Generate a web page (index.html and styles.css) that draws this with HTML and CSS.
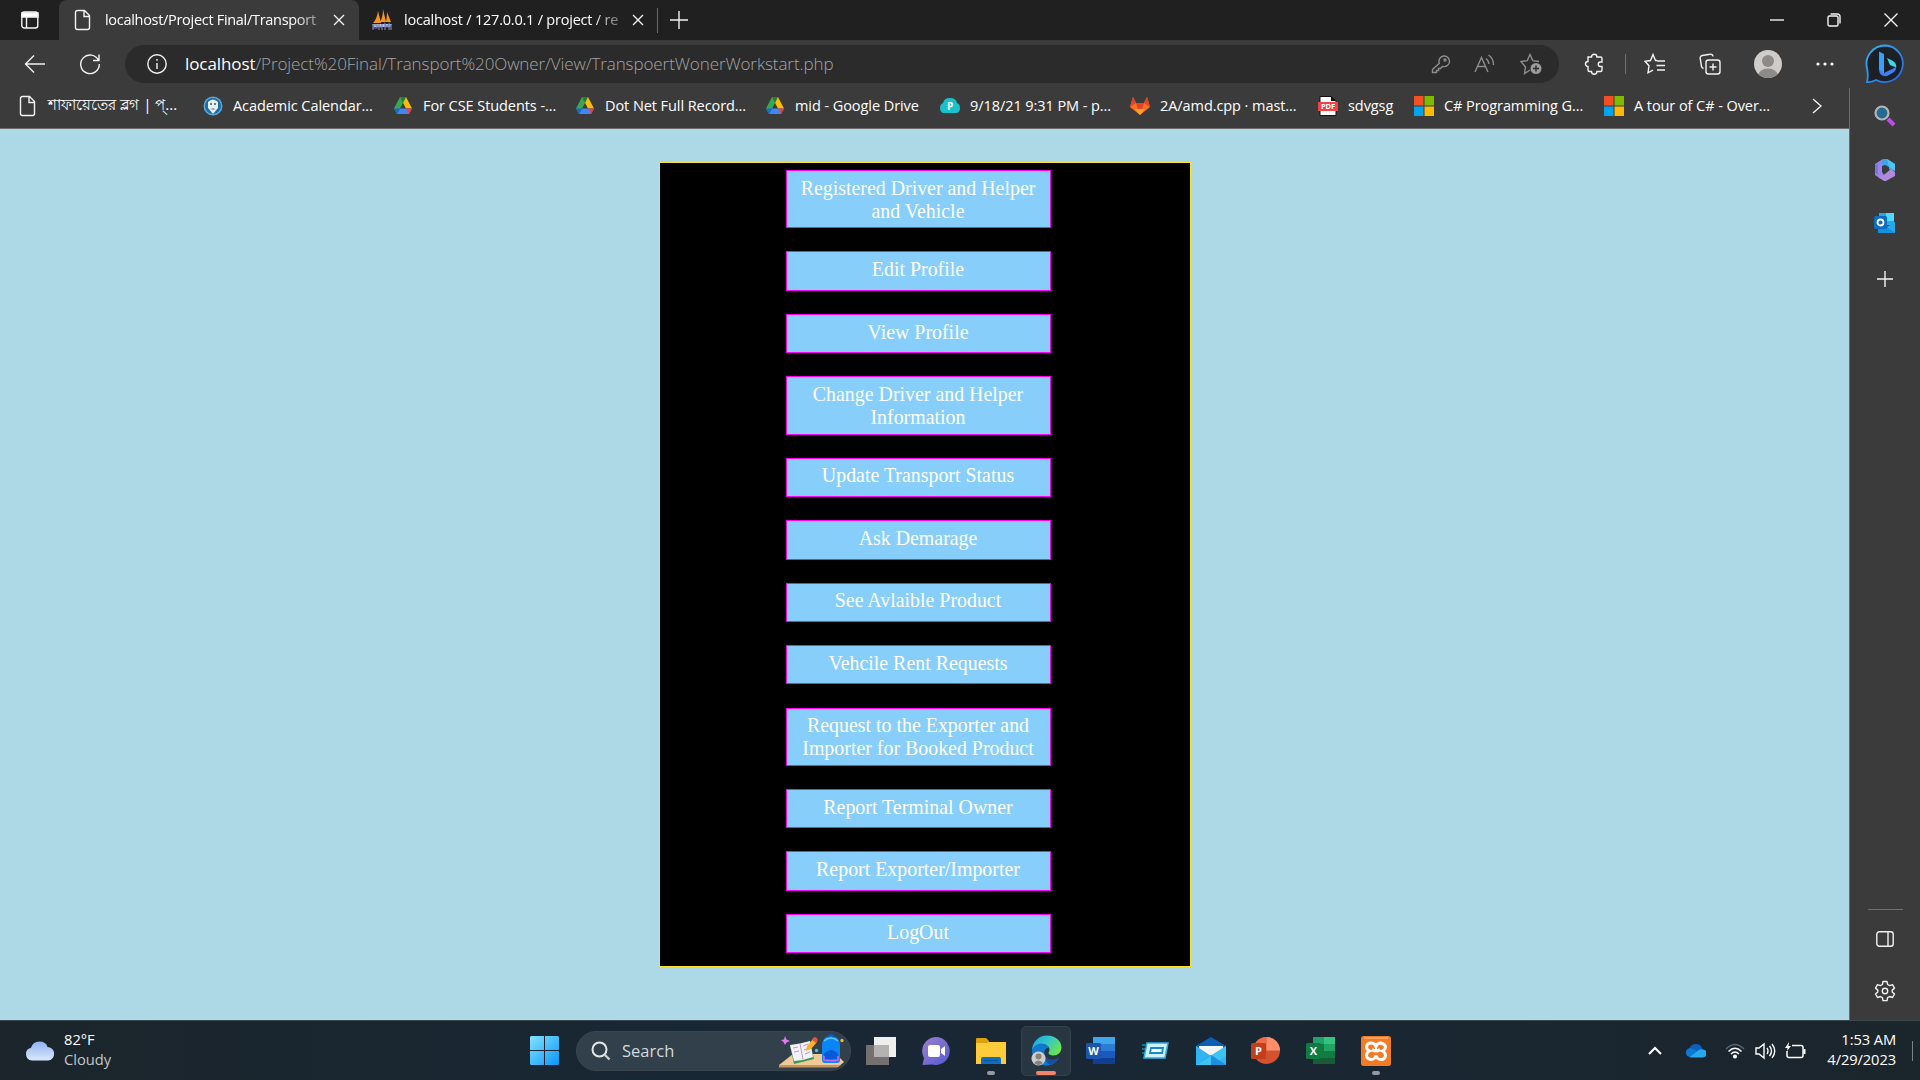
FILE: index.html
```html
<!DOCTYPE html>
<html lang="en">
<head>
<meta charset="utf-8">
<title>Transport Owner</title>
<link rel="stylesheet" href="styles.css">
</head>
<body>
<div class="desktop">
  <header class="tabstrip">
    <div class="tab-actions"><svg class="line" width="20" height="20" viewBox="0 0 20 20"><rect x="1.8" y="2" width="16" height="16" rx="2.5"/><path d="M2 3h16v4H2z" fill="#fff"/><path d="M6.5 7v11"/></svg></div>
    <div class="tab active">
      <svg class="line" width="20" height="22" viewBox="0 0 20 22"><path d="M4.500 1.500h7l5 5v12a2 2 0 0 1-2 2h-10a2 2 0 0 1-2-2v-15a2 2 0 0 1 2-2zM11 1.500v6h5.500"/></svg>
      <span class="tab-title">localhost/Project Final/Transport</span>
      <svg class="line close" width="12" height="12" viewBox="0 0 12 12"><path d="M1 1l10 10M11 1L1 11"/></svg>
    </div>
    <div class="tab">
      <svg width="22" height="22" viewBox="0 0 22 22"><path d="M2 14Q6 10 7 2l3 12zM9 13Q12 8 12 0l3 13zM15 13q1-5 1-10l4 10z" fill="#f7961d"/><path d="M1 15h20l-2 3H3z" fill="#b9bfe2"/><path d="M2 15v6M2 16h4v3H2M8 15v6M11 15v6M8 18h3M14 21v-6l2 3 2-3v6M20 15v6" fill="none" stroke="#7780b7" stroke-width="1.200"/></svg>
      <span class="tab-title second">localhost / 127.0.0.1 / project / re</span>
      <svg class="line close" width="12" height="12" viewBox="0 0 12 12"><path d="M1 1l10 10M11 1L1 11"/></svg>
    </div>
    <div class="tab-divider"></div>
    <svg class="line new-tab" width="18" height="18" viewBox="0 0 18 18"><path d="M9 0v18M0 9h18"/></svg>
    <div class="window-controls">
      <svg class="line" width="14" height="14" viewBox="0 0 14 14"><path d="M0 7h14"/></svg>
      <svg class="line" width="14" height="14" viewBox="0 0 14 14"><rect x="1" y="3" width="10" height="10" rx="1.500"/><path d="M3.500 1h7a2.500 2.500 0 0 1 2.500 2.500v7"/></svg>
      <svg class="line" width="14" height="14" viewBox="0 0 14 14"><path d="M.5.5l13 13M13.500.5l-13 13"/></svg>
    </div>
  </header>

  <div class="toolbar">
    <svg class="line back" width="22" height="20" viewBox="0 0 22 20"><path d="M21 10H1.500M10 1.500L1.500 10l8.500 8.500"/></svg>
    <svg class="line reload" width="22" height="22" viewBox="0 0 22 22"><path d="M19.500 7.500A9.300 9.300 0 1 0 20.300 11M20 1.500v6h-6"/></svg>
    <div class="address">
      <svg class="line" width="20" height="20" viewBox="0 0 20 20"><circle cx="10" cy="10" r="9.200"/><path d="M10 9v6M10 5v1.800"/></svg>
      <span class="url"><b>localhost</b>/Project%20Final/Transport%20Owner/View/TranspoertWonerWorkstart.php</span>
      <div class="address-icons">
        <svg width="20" height="20" viewBox="0 0 20 20"><path d="M8.300 9.200a5.300 5.300 0 1 1 3.300 3.100L9.500 14.500H7.500v2H5.500v2H1.500v-3z"/><circle cx="14" cy="6" r="1"/></svg>
        <svg width="22" height="20" viewBox="0 0 22 20"><path d="M1 18L7.500 3.500 14 18M3.500 12.500h8M12 4.500q2.500 2 3 5.500M14.500 1q5 3.500 5 10"/></svg>
        <svg width="24" height="22" viewBox="0 0 24 22"><path d="M11 17l-5.500 3.500 1-6.500L2 8.500l6.300-.9L11 1.500l2.800 6.100 6.200.9"/><circle cx="17" cy="15.500" r="5.500" fill="#9b9b9b" stroke="none"/><path d="M17 12.500v6M14 15.500h6" stroke="#2b2b2b"/></svg>
      </div>
    </div>
    <div class="toolbar-icons">
      <svg class="line ext" width="20" height="22" viewBox="0 0 20 22"><path d="M4 4h3.500a2.700 2.700 0 0 1 5.400 0H16.500q1.500 0 1.500 1.500V9h-1.500a2.200 2.200 0 0 0 0 4.500H18V17q0 1.500-1.500 1.500h-3.600a2.700 2.700 0 0 1-5.400 0H5.500Q4 18.500 4 17v-3.500a2.500 2.500 0 0 1 0-5z"/></svg>
      <div class="tool-divider"></div>
      <svg class="line fav" width="22" height="22" viewBox="0 0 22 22"><path d="M13 7.500h-1.500L9 1.500 6.500 7.500 1 8.300l4 4.500-1 7 5-2.600M13 8h8M12.500 12.500H21M13 17h8"/></svg>
      <svg class="line coll" width="22" height="22" viewBox="0 0 22 22"><rect x="7" y="7" width="14" height="14" rx="2.500"/><path d="M14 10.500v7M10.500 14h7M4.500 15.500a3 3 0 0 1-2-2L1.200 5.500a2.500 2.500 0 0 1 2-3L11 1.200a2.500 2.500 0 0 1 3 2.300"/></svg>
      <svg class="avatar" width="28" height="28" viewBox="0 0 28 28"><clipPath id="av"><circle cx="14" cy="14" r="14"/></clipPath><g clip-path="url(#av)"><path d="M0 0h28v28H0z" fill="#cfccca"/><circle cx="14" cy="11" r="6" fill="#8e8a87"/><ellipse cx="14" cy="26" rx="10" ry="7.500" fill="#8e8a87"/></g></svg>
      <svg class="dots" width="18" height="4" viewBox="0 0 18 4" fill="#fff"><circle cx="2" cy="2" r="1.600"/><circle cx="9" cy="2" r="1.600"/><circle cx="16" cy="2" r="1.600"/></svg>
      <svg class="bing" width="40" height="40" viewBox="0 0 40 40"><defs><linearGradient id="bg1" x1="0" y1="0" x2="1" y2="1"><stop offset="0" stop-color="#25bdf2"/><stop offset="1" stop-color="#2a62e8"/></linearGradient></defs><path d="M20 1.500A18.300 18.300 0 1 1 11 36Q6 38.500 2 38 3.500 33 2.200 25A18.500 18.500 0 0 1 20 1.500z" fill="#1c1f26" stroke="url(#bg1)" stroke-width="1.800"/><path d="M14 7.500l5 2.500v20l-5-4z" fill="#38a0fa"/><path d="M14 25q0 6 5 7 3 .5 5-1l5-3q2.500-2 2-5l-12 6z" fill="#3f7df5"/><path d="M22 14l6 3q3.500 2 3.300 6.500L25 21z" fill="#38d9e9"/></svg>
    </div>
  </div>

  <div class="browser-body">
    <div class="viewport">
      <nav class="bookmarks">
        <div class="bookmark"><svg class="line" width="20" height="22" viewBox="0 0 20 22"><path d="M4.500 1.500h7l5 5v12a2 2 0 0 1-2 2h-10a2 2 0 0 1-2-2v-15a2 2 0 0 1 2-2zM11 1.500v6h5.500"/></svg><span class="bengali">শাফায়েতের ব্লগ | প্...</span></div>
        <div class="bookmark"><svg width="20" height="20" viewBox="0 0 20 20"><circle cx="10" cy="10" r="9.500" fill="#5ca9d7"/><circle cx="10" cy="10" r="8" fill="#1b6dab"/><path d="M5 6q5-5 10 0v6l-5 6-5-6z" fill="#e4f0f4"/><circle cx="8" cy="8" r="1" fill="#5b4b43"/><circle cx="12" cy="8" r="1" fill="#5b4b43"/><path d="M8.500 13h3" stroke="#6f6058"/></svg><span>Academic Calendar...</span></div>
        <div class="bookmark"><svg width="20" height="20" viewBox="0 0 20 20"><use href="#drive"/></svg><span>For CSE Students -...</span></div>
        <div class="bookmark"><svg width="20" height="20" viewBox="0 0 20 20"><use href="#drive"/></svg><span>Dot Net Full Record...</span></div>
        <div class="bookmark"><svg width="20" height="20" viewBox="0 0 20 20"><use href="#drive"/></svg><span>mid - Google Drive</span></div>
        <div class="bookmark"><svg width="20" height="20" viewBox="0 0 20 20"><path d="M3 17q-3-1-3-5t3-5q1-5 7-5t7 5q3 1 3 5t-3 5z" fill="#18c1cb"/><text x="10" y="13.500" class="glyph" font-size="10">P</text></svg><span>9/18/21 9:31 PM - p...</span></div>
        <div class="bookmark"><svg width="20" height="20" viewBox="0 0 20 20"><path d="M0 11L3 1l3 6h8l3-6 3 10-10 8z" fill="#fc6d26"/><path d="M6 7h8l-4 12z" fill="#e24329"/><path d="M3 1l3 6-6 4zM17 1l-3 6 6 4z" fill="#e24329"/><path d="M10 19l-5-6h10z" fill="#fca326"/></svg><span>2A/amd.cpp · mast...</span></div>
        <div class="bookmark"><svg width="20" height="20" viewBox="0 0 20 20"><path d="M2 .5h11l5 5v14H2z" fill="#fff" stroke="#111"/><path d="M13 0v5h5z" fill="#111"/><path d="M0 6h20v9H0z" fill="#f04349"/><text x="10" y="13.300" class="glyph" font-size="7.500">PDF</text></svg><span>sdvgsg</span></div>
        <div class="bookmark"><svg width="20" height="20" viewBox="0 0 20 20"><use href="#ms"/></svg><span>C# Programming G...</span></div>
        <div class="bookmark"><svg width="20" height="20" viewBox="0 0 20 20"><use href="#ms"/></svg><span>A tour of C# - Over...</span></div>
        <svg class="line more" width="10" height="16" viewBox="0 0 10 16"><path d="M1 1l8 7-8 7"/></svg>
      </nav>
      <main class="page">
        <div class="menu">
          <a class="menu-item tall">Registered Driver and Helper and Vehicle</a>
          <a class="menu-item">Edit Profile</a>
          <a class="menu-item">View Profile</a>
          <a class="menu-item tall">Change Driver and Helper Information</a>
          <a class="menu-item">Update Transport Status</a>
          <a class="menu-item">Ask Demarage</a>
          <a class="menu-item">See Avlaible Product</a>
          <a class="menu-item">Vehcile Rent Requests</a>
          <a class="menu-item tall">Request to the Exporter and Importer for Booked Product</a>
          <a class="menu-item">Report Terminal Owner</a>
          <a class="menu-item">Report Exporter/Importer</a>
          <a class="menu-item">LogOut</a>
        </div>
      </main>
    </div>
    <aside class="sidebar">
      <svg width="22" height="22" viewBox="0 0 22 22"><path d="M14 14l6 6" stroke="#c04af0" stroke-width="4"/><circle cx="8" cy="8" r="6.500" fill="#246a91" stroke="#b5b5b5" stroke-width="2.200"/></svg>
      <svg width="22" height="22" viewBox="0 0 22 22"><path d="M9 0L1 5v11l6 4 3-4-2-3V7l5-4z" fill="#9a86ea"/><path d="M10 0h3l8 5v7l-6-1.500V8l-4-2-3 1V2z" fill="#3f9fe8"/><path d="M21 13v4l-9 5h-2l-6-4 4-1 3-2 6-5z" fill="#b08add"/><path d="M13 0l8 5v7l-6-4z" fill="#4cc5f3"/><path d="M1 14V6l3-2v12z" fill="#7a76e0"/></svg>
      <svg width="22" height="22" viewBox="0 0 22 22"><path d="M5 1h15v12H5z" fill="#28a8ea"/><path d="M12 1h8v8h-8z" fill="#50d9ff"/><path d="M4 10l9 5 8-5v11H4z" fill="#1490df"/><path d="M13 15l8-5v11z" fill="#28a8ea"/><rect x="0" y="4" width="13" height="13" rx="1.500" fill="#0f6cbd"/><circle cx="6.500" cy="10.500" r="3" fill="none" stroke="#fff" stroke-width="1.800"/></svg>
      <svg class="line add" width="16" height="16" viewBox="0 0 16 16"><path d="M8 0v16M0 8h16"/></svg>
      <div class="sidebar-bottom">
        <svg class="line" width="18" height="16" viewBox="0 0 18 16"><rect x=".8" y=".8" width="16.400" height="14.400" rx="2.500"/><path d="M12 1v14"/></svg>
        <svg class="line" width="22" height="22" viewBox="0 0 22 22"><path d="M9 1.500h4l.6 3 2 1.100 2.900-1 2 3.500-2.300 2v1.900l2.300 2-2 3.500-2.900-1-2 1.100-.6 3H9l-.6-3-2-1.100-2.900 1-2-3.500 2.300-2v-1.900l-2.300-2 2-3.500 2.900 1 2-1.100z" stroke-linejoin="round"/><circle cx="11" cy="11" r="2.700"/></svg>
      </div>
    </aside>
  </div>

  <footer class="taskbar">
    <div class="weather">
      <svg width="30" height="20" viewBox="0 0 30 20"><defs><linearGradient id="cl" x1="0" y1="0" x2="0" y2="1"><stop offset="0" stop-color="#8fb4f5"/><stop offset="1" stop-color="#dbe7fb"/></linearGradient></defs><path d="M7 19.500a6.500 6.500 0 0 1-1-12.800Q8 .5 14.500.5t8 5.500a6.800 6.800 0 0 1 1 13.500z" fill="url(#cl)"/></svg>
      <div class="weather-text"><span>82°F</span><span class="dim">Cloudy</span></div>
    </div>
    <div class="apps">
      <svg class="start" width="29" height="29" viewBox="0 0 29 29"><defs><linearGradient id="win" gradientUnits="userSpaceOnUse" x1="0" y1="0" x2="29" y2="29"><stop offset="0" stop-color="#84e2ff"/><stop offset="1" stop-color="#0a96fb"/></linearGradient></defs><path d="M1 0h13v14H0V1zM15 0h13l1 1v13H15zM0 15h14v14H1l-1-1zM15 15h14v13l-1 1H15z" fill="url(#win)"/></svg>
      <div class="search">
        <svg width="20" height="20" viewBox="0 0 20 20"><circle cx="8.500" cy="8.500" r="7" fill="none" stroke="#e4e7e9" stroke-width="2"/><path d="M13.500 13.500l5 5" stroke="#c8cccf" stroke-width="2.400"/></svg>
        <span>Search</span>
        <svg class="search-art" width="66" height="34" viewBox="0 0 66 34"><path d="M0 31L14 20h43l8 8-6 5H0z" fill="#f0c997"/><path d="M0 31h62l-4 2.500H0z" fill="#c7955f"/><path d="M11 12l20-4 4 17-20 5z" fill="#3b9a4c"/><path d="M11 11l10-1.500L31 7l3 16-10 3-9 1z" fill="#f5f0fb"/><path d="M21 9.500l3 16M14 14l5-1M15 18l5-1M24 12l5-2M25 16l5-2M26 20l5-2" stroke="#aaa0c0"/><path d="M27 17l1-5 6-7 4 3-6 7z" fill="#f9b234"/><path d="M33 6l2-3q3 0 4 3l-2 3z" fill="#e8513c"/><path d="M43 26V12q0-10 9-10t9 10v14q0 3-3 3H46q-3 0-3-3z" fill="#0a86fa"/><path d="M45 7q7-6 14 0" stroke="#5cc6ff" fill="none" stroke-width="1.500"/><path d="M49 3q3-5 6 0" stroke="#0758bd" fill="none" stroke-width="2"/><path d="M45 27V20q7-8 14 0v7z" fill="#0759d8"/><path d="M45 22v4q7 1 14 0v-4" fill="none" stroke="#bc72ef" stroke-width="1.500"/><path d="M6 2l1.500 3.500L11 7 7.500 8.500 6 11 4.500 8 2 6l3-.5z" fill="#e67af0"/><circle cx="37.500" cy="16.500" r="1.700" fill="#4ec5d7"/><circle cx="63" cy="6.500" r="1.700" fill="#f5b324"/></svg>
      </div>
      <div class="app"><svg width="30" height="28" viewBox="0 0 30 28"><path d="M0 8h23v20H0z" fill="#74716f"/><path d="M8 0h22v20H8z" fill="#efefef"/><path d="M8 8h15v12H8z" fill="#b5b3b2"/></svg></div>
      <div class="app"><svg width="30" height="30" viewBox="0 0 30 30"><defs><linearGradient id="ch" x1="0" y1="0" x2="1" y2="1"><stop offset="0" stop-color="#9c80cf"/><stop offset="1" stop-color="#5459cf"/></linearGradient></defs><path d="M15 1a14 14 0 1 1-4 27.500L1.500 29 3 22A14 14 0 0 1 15 1z" fill="url(#ch)"/><rect x="7" y="9" width="12" height="12" rx="2" fill="#fff"/><path d="M20 13l4-3v10l-4-3z" fill="#fff"/></svg></div>
      <div class="app running"><svg width="30" height="28" viewBox="0 0 30 28"><path d="M0 2q0-1 1-1h9l3 3v5H0z" fill="#dda20a"/><path d="M0 6h11l2-1h17v22H0z" fill="#fdcb3b"/><path d="M5 27v-5q0-2 2-2h16q2 0 2 2v5z" fill="#0b70c0"/><path d="M8 23.500h14" stroke="#07509a" stroke-width="1.300"/></svg></div>
      <div class="app current"><svg width="31" height="31" viewBox="0 0 31 31"><defs><linearGradient id="eg" x1="0" y1="0" x2="1" y2=".6"><stop offset="0" stop-color="#1a9fe2"/><stop offset=".5" stop-color="#31c6cf"/><stop offset="1" stop-color="#6be34e"/></linearGradient></defs><path d="M1 15c1-5 5-7 10-7 4 0 7 2 7 5-3-1-6 3-4 8 2 4 7 6 14 2-3 5-7 7.500-13 7.500C7 30.500 1 23 1 15z" fill="#1278cf"/><path d="M1 15A15 15 0 0 1 16 .5c9 0 14.500 6 14.500 12 0 5-4 8-8 8-3 0-5-1-5-2.500 0-1 1-1.500 1-3.500 0-3-3-6-8-6-5 0-8 3-9.500 6.500z" fill="url(#eg)"/><path d="M14 21q4 6 14 2-3 5-8 7-6-2-6-9z" fill="#14529d"/><circle cx="7.500" cy="23.500" r="7" fill="#cfcdca"/><circle cx="7.500" cy="21.500" r="3" fill="#85817d"/><path d="M3 28q4.500-5 9 0-4 4-9 0z" fill="#85817d"/></svg></div>
      <div class="app"><svg width="30" height="28" viewBox="0 0 30 28"><path d="M7 0h22v7H7z" fill="#41a5ee"/><path d="M7 7h22v7H7z" fill="#2b7cd3"/><path d="M7 14h22v7H7z" fill="#185abd"/><path d="M7 21h22v6H7z" fill="#103f91"/><rect y="6" width="15" height="16" rx="1.500" fill="#1b55b0"/><text x="7.500" y="18" class="glyph" font-size="11">W</text></svg></div>
      <div class="app"><svg width="28" height="20" viewBox="0 0 28 20"><path d="M5 2h21l-3 15H2z" fill="#cdf2ff" stroke="#2bb0e5" stroke-width="1.500"/><path d="M9 7h12l-1 5H8z" fill="#fff" stroke="#1689c8" stroke-width="1.800"/><path d="M0 4h5M0 8h4M0 12h3" stroke="#2bb0e5"/></svg></div>
      <div class="app"><svg width="30" height="28" viewBox="0 0 30 28"><path d="M0 9L15 0l15 9v5H0z" fill="#0a5fb4"/><path d="M3 9h24v10H3z" fill="#f4f4f4"/><path d="M0 9l15 10L30 9v19H0z" fill="#30b5f2"/><path d="M0 28h30L15 18z" fill="#1c8fe0"/><path d="M0 28L30 9v10L16 28z" fill="#3cc4f5"/><path d="M15 18l15 10H15z" fill="#1c8fe0"/></svg></div>
      <div class="app"><svg width="30" height="28" viewBox="0 0 30 28"><circle cx="15.500" cy="13.500" r="13.500" fill="#d35230"/><path d="M15.500 0A13.500 13.500 0 0 0 2 13.500h13.500z" fill="#ed6c47"/><path d="M15.500 0A13.500 13.500 0 0 1 29 13.500H15.500z" fill="#ff8f6b"/><rect y="6" width="15" height="16" rx="1.500" fill="#c43e1c"/><text x="7.500" y="18" class="glyph" font-size="11">P</text></svg></div>
      <div class="app"><svg width="30" height="28" viewBox="0 0 30 28"><path d="M7 0h11v7H7z" fill="#21a366"/><path d="M18 0h11v7H18z" fill="#33c481"/><path d="M7 7h11v14H7z" fill="#107c41"/><path d="M18 7h11v7H18z" fill="#21a366"/><path d="M18 14h11v7H18z" fill="#107c41"/><path d="M7 21h22v6H7z" fill="#185c37"/><rect y="6" width="15" height="16" rx="1.500" fill="#107c41"/><text x="7.500" y="18" class="glyph" font-size="11">X</text></svg></div>
      <div class="app running"><svg width="30" height="30" viewBox="0 0 30 30"><rect width="30" height="30" rx="2.500" fill="#f47a24"/><path d="M3 2h24" stroke="#ffb27a" stroke-width="1.500"/><path d="M15 10.500Q14 7 10 7T5.500 11q0 2.500 3 4-3 1.500-3 4.500t4.500 4q4 0 5-4 1 4 5 4t4.500-4q0-3-3-4.500 3-1.500 3-4T20 7q-4 0-5 3.500zM11 13.500q4 3 8 0" fill="none" stroke="#fff" stroke-width="3"/></svg></div>
    </div>
    <div class="tray">
      <svg class="chevron" width="14" height="9" viewBox="0 0 14 9"><path d="M1 8l6-6 6 6" fill="none" stroke="#fff" stroke-width="2"/></svg>
      <svg class="onedrive" width="21" height="14" viewBox="0 0 21 14"><path d="M4 5Q6 0 11 0t6.500 5L10 9z" fill="#0a5fc0"/><path d="M4.500 13a4.500 4.500 0 0 1 0-8.800Q8 4 12 7l-5 6z" fill="#0f78d4"/><path d="M5 13l8-6.500q3-2 5-1a4 4 0 0 1-1 8H5z" fill="#28a8ea"/></svg>
      <svg class="wifi" width="20" height="16" viewBox="0 0 20 16" fill="none" stroke="#fff" stroke-width="1.500"><path d="M1 6q9-9 18 0" stroke="#5b646a"/><path d="M3.500 8.500q6.500-6.500 13 0M6 11q4-4 8 0"/><circle cx="10" cy="13.500" r="1.300" fill="#fff"/></svg>
      <svg class="sound" width="21" height="18" viewBox="0 0 21 18" fill="none" stroke="#fff" stroke-width="1.400"><path d="M1 6h3l5-4v14l-5-4H1zM12 6q2 3 0 6M14.500 4q4 5 0 10M17 2q5.500 7 0 14"/></svg>
      <svg class="battery" width="21" height="18" viewBox="0 0 21 18"><path d="M7 3.500h9q2 0 2 2v8q0 2-2 2H4q-2 0-2-2V9" fill="none" stroke="#fff" stroke-width="1.500"/><path d="M18.500 7h2v5h-2zM4 0L0 6h2.500L2 9l4-5H3.500z" fill="#fff"/></svg>
      <div class="clock"><span>1:53 AM</span><span>4/29/2023</span></div>
      <div class="show-desktop"></div>
    </div>
  </footer>
</div>

<svg width="0" height="0" class="defs">
  <symbol id="drive" viewBox="0 0 20 20"><path d="M7 1L1 12.500 4 18l6-11z" fill="#34a853"/><path d="M7 1h6l6 11.500h-6z" fill="#fbbc04"/><path d="M7 1h6l-3 6z" fill="#188038"/><path d="M4 18l3-5.500h12L16 18z" fill="#4285f4"/><path d="M13 12.500h6L16 18z" fill="#ea4335"/><path d="M1 12.500h6L4 18z" fill="#1967d2"/></symbol>
  <symbol id="ms" viewBox="0 0 20 20"><path d="M0 0h9.500v9.500H0z" fill="#f25022"/><path d="M10.500 0H20v9.500h-9.500z" fill="#7fba00"/><path d="M0 10.500h9.500V20H0z" fill="#00a4ef"/><path d="M10.500 10.500H20V20h-9.500z" fill="#ffb900"/></symbol>
</svg>
</body>
</html>
```
FILE: styles.css
```css
* { box-sizing: border-box; }
body {
  margin: 0;
  overflow: hidden;
  font-family: "Open Sans", "Noto Sans", sans-serif;
  color: #fff;
  background: #3b3b3b;
}
svg { display: block; flex: none; }
.defs { display: none; }
.line { fill: none; stroke: #f2f2f2; stroke-width: 1.4; }
.glyph { fill: #fff; font-family: "Open Sans", sans-serif; font-weight: 700; text-anchor: middle; }
.desktop { width: 1920px; height: 1080px; display: flex; flex-direction: column; }

/* Tab strip */
.tabstrip { height: 40px; flex: none; display: flex; align-items: center; background: #202020; }
.tab-actions { width: 59px; padding-left: 20px; }
.tab { width: 298px; height: 40px; display: flex; align-items: center; padding: 0 13px 0 12px; font-size: 14.5px; }
.tab.active { width: 300px; padding: 0 14px; background: #3b3b3b; border-radius: 8px 8px 0 0; }
.tab-title {
  width: 218px; margin-left: 12px; white-space: nowrap; letter-spacing: -0.3px; line-height: 20px; padding-bottom: 1px;
  -webkit-mask-image: linear-gradient(90deg, #000 86%, rgba(0, 0, 0, .3));
  mask-image: linear-gradient(90deg, #000 86%, rgba(0, 0, 0, .3));
}
.tab-title.second { margin-left: 11px; letter-spacing: -0.22px; }
.tab .close { margin-left: auto; }
.tab-divider { width: 1px; height: 25px; background: #6a6a6a; }
.new-tab { margin-left: 12px; }
.window-controls { margin-left: auto; display: flex; gap: 43px; padding-right: 22px; }

/* Toolbar */
.toolbar { height: 48px; flex: none; display: flex; align-items: center; padding-left: 24px; background: #3b3b3b; }
.reload { margin-left: 33px; }
.address { width: 1434px; height: 38px; margin: 0 0 1px 24px; padding: 0 16px 0 22px; border-radius: 19px; background: #2b2b2b; display: flex; align-items: center; }
.url { margin-left: 18px; font-size: 17px; font-weight: 300; letter-spacing: -0.09px; color: #a5a5a5; white-space: nowrap; }
.url b { font-weight: 400; color: #fff; }
.address-icons { margin-left: auto; display: flex; align-items: center; gap: 23px; fill: none; stroke: #8d8d8d; stroke-width: 1.4; }
.toolbar-icons { flex: 1; display: flex; align-items: center; padding-left: 25px; }
.tool-divider { width: 1px; height: 20px; margin-left: 21px; background: #707070; }
.fav { margin-left: 18px; }
.coll { margin-left: 33px; }
.avatar { margin-left: 33px; }
.dots { margin-left: 34px; }
.bing { margin-left: 31px; }

/* Browser body */
.browser-body { flex: 1; min-height: 0; display: flex; }
.viewport { width: 1850px; display: flex; flex-direction: column; border-right: 1px solid #6b6b6b; }
.bookmarks {
  height: 41px; flex: none; display: grid; align-items: center; padding: 0 0 5px 18px;
  grid-template-columns: 185px 190px 182px 190px 175px 190px 188px 96px 190px 208px 10px;
  font-size: 14.5px; letter-spacing: -0.07px; border-bottom: 1px solid #6b6b6b; background: #3b3b3b;
}
.bookmark { display: flex; align-items: center; gap: 10px; white-space: nowrap; }
.bengali { font-size: 15.2px; }
.page { flex: 1; padding: 33px 0 0 659px; background: #add8e6; }
.menu {
  width: 532px; height: 805px; padding: 7.1px 0 0 126px; display: flex; flex-direction: column; gap: 23.1px;
  border: 1px solid #fde12d; background: #000;
  font: 19.9px/23px "Liberation Serif", serif;
}
.menu-item { width: 265px; height: 39.4px; padding: 5.8px 11px 0 10px; border: 1px solid #f0f; background: #87cefa; color: #fff; text-align: center; }
.menu-item.tall { height: 58.2px; }

/* Sidebar */
.sidebar { flex: 1; display: flex; flex-direction: column; align-items: center; gap: 31.5px; padding-top: 17px; background: #3b3b3b; }
.add { margin-top: 5px; }
.sidebar-bottom { width: 35px; margin-top: auto; padding: 21px 0 18px; display: flex; flex-direction: column; align-items: center; gap: 33px; border-top: 1px solid #707070; }

/* Taskbar */
.taskbar { height: 60px; flex: none; display: flex; align-items: center; border-top: 1px solid #3c474f; background: linear-gradient(90deg, #1b252b, #182734 35%, #192733 65%, #1b252c); }
.weather { width: 530px; display: flex; align-items: center; gap: 9px; padding-left: 25px; }
.weather-text, .clock { display: flex; flex-direction: column; padding-bottom: 3px; font-size: 14.7px; line-height: 20px; }
.dim { color: #c3c6c9; }
.apps { display: flex; align-items: center; }
.search { width: 275px; height: 40px; margin: 0 2.500px 0 17px; padding: 0 5px 0 14px; border-radius: 20px; display: flex; align-items: center; background: #31404b; border: 1px solid #384650; font-size: 16.500px; color: #d5d9dc; }
.search span { margin-left: 11px; padding-bottom: 1px; }
.search-art { margin-left: auto; }
.app { position: relative; width: 50px; height: 50px; margin: 0 2.500px; display: grid; place-items: center; border-radius: 5px; }
.app.current { background: #283642; border: 1px solid #33414b; }
.app.running::after, .app.current::after { content: ""; position: absolute; left: 21px; bottom: 1px; width: 8px; height: 4px; border-radius: 2px; background: #949a9f; }
.app.current::after { left: 14px; bottom: 0; width: 20px; background: #f5836a; }
.tray { flex: 1; display: flex; align-items: center; justify-content: flex-end; padding-right: 7px; }
.onedrive { margin-left: 23px; }
.wifi { margin-left: 19px; }
.sound { margin-left: 10px; }
.battery { margin-left: 9px; }
.clock { width: 90px; text-align: right; letter-spacing: -0.1px; }
.show-desktop { width: 1px; height: 20px; margin-left: 16px; background: #7a8287; }
```
